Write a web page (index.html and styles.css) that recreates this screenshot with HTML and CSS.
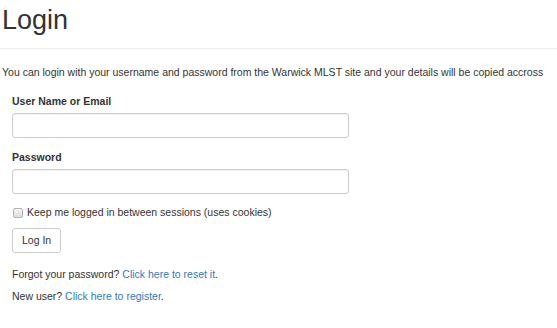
FILE: index.html
```html
<!DOCTYPE html>
<html>
<head>
<meta charset="utf-8">
<title>Login</title>
<link rel="stylesheet" href="styles.css">
</head>
<body>
<div class="page-header">
<h1>Login</h1>
</div>

<p class="intro">You can login with your username and password from the Warwick MLST site and your details will be copied accross</p>

<form class="login-form">
<div class="form-group">
<label for="username">User Name or Email</label>
<input type="text" id="username" class="form-control">
</div>
<div class="form-group">
<label for="password">Password</label>
<input type="password" id="password" class="form-control">
</div>
<div class="checkbox">
<label><input type="checkbox"> Keep me logged in between sessions (uses cookies)</label>
</div>
<button type="button" class="btn">Log In</button>

<p class="note first">Forgot your password? <a href="#">Click here to reset it</a>.</p>
<p class="note">New user? <a href="#">Click here to register</a>.</p>
</form>
</body>
</html>
```

FILE: styles.css
```css
/* Login page, bootstrap-ish */

body
{ margin: 0;
padding: 0 2px;
font-family: "Liberation Sans", Arial, sans-serif;
font-size: 10.5px;
line-height: 15px;
color: #333;
background-color: #fff;
}

a
{ color: #337ab7;
text-decoration: none;
}

div.page-header
{ padding-top: 5px;
padding-bottom: 13px;
border-bottom: 1px solid #eee;
margin-right: -2px;
margin-left: -2px;
padding-left: 2px;
}

div.page-header h1
{ margin: 0;
font-size: 27px;
font-weight: normal;
line-height: 30px;
}

p.intro
{ margin: 16px 0 0 0;
}

form.login-form
{ margin-top: 14px;
padding-left: 10px;
width: 337px;
}

div.form-group
{ margin-bottom: 12px;
}

div.form-group label
{ display: block;
font-weight: bold;
margin-bottom: 3.5px;
}

input.form-control
{ display: block;
box-sizing: border-box;
width: 100%;
height: 25.5px;
margin: 0;
padding: 4px 9px;
border: 1px solid #ccc;
border-radius: 3px;
box-shadow: inset 0 1px 1px rgba(0,0,0,0.06);
font: inherit;
}

div.checkbox
{ margin-top: -1px;
margin-bottom: 7.5px;
}

div.checkbox label
{ display: flex;
align-items: center;
}

div.checkbox input
{ appearance: none;
-webkit-appearance: none;
width: 10px;
height: 10px;
margin: 0 4px 0 1px;
border: 1px solid #b5b5b5;
border-radius: 2px;
background: linear-gradient(#f4f4f4, #dedede);
box-sizing: border-box;
}

button.btn
{ display: block;
box-sizing: border-box;
height: 25px;
padding: 0 9px;
border: 1px solid #ccc;
border-radius: 3px;
background-color: #fff;
color: #333;
font: inherit;
}

p.note
{ margin: 0 0 7.5px 0;
}

p.note.first
{ margin-top: 14px;
}
```
